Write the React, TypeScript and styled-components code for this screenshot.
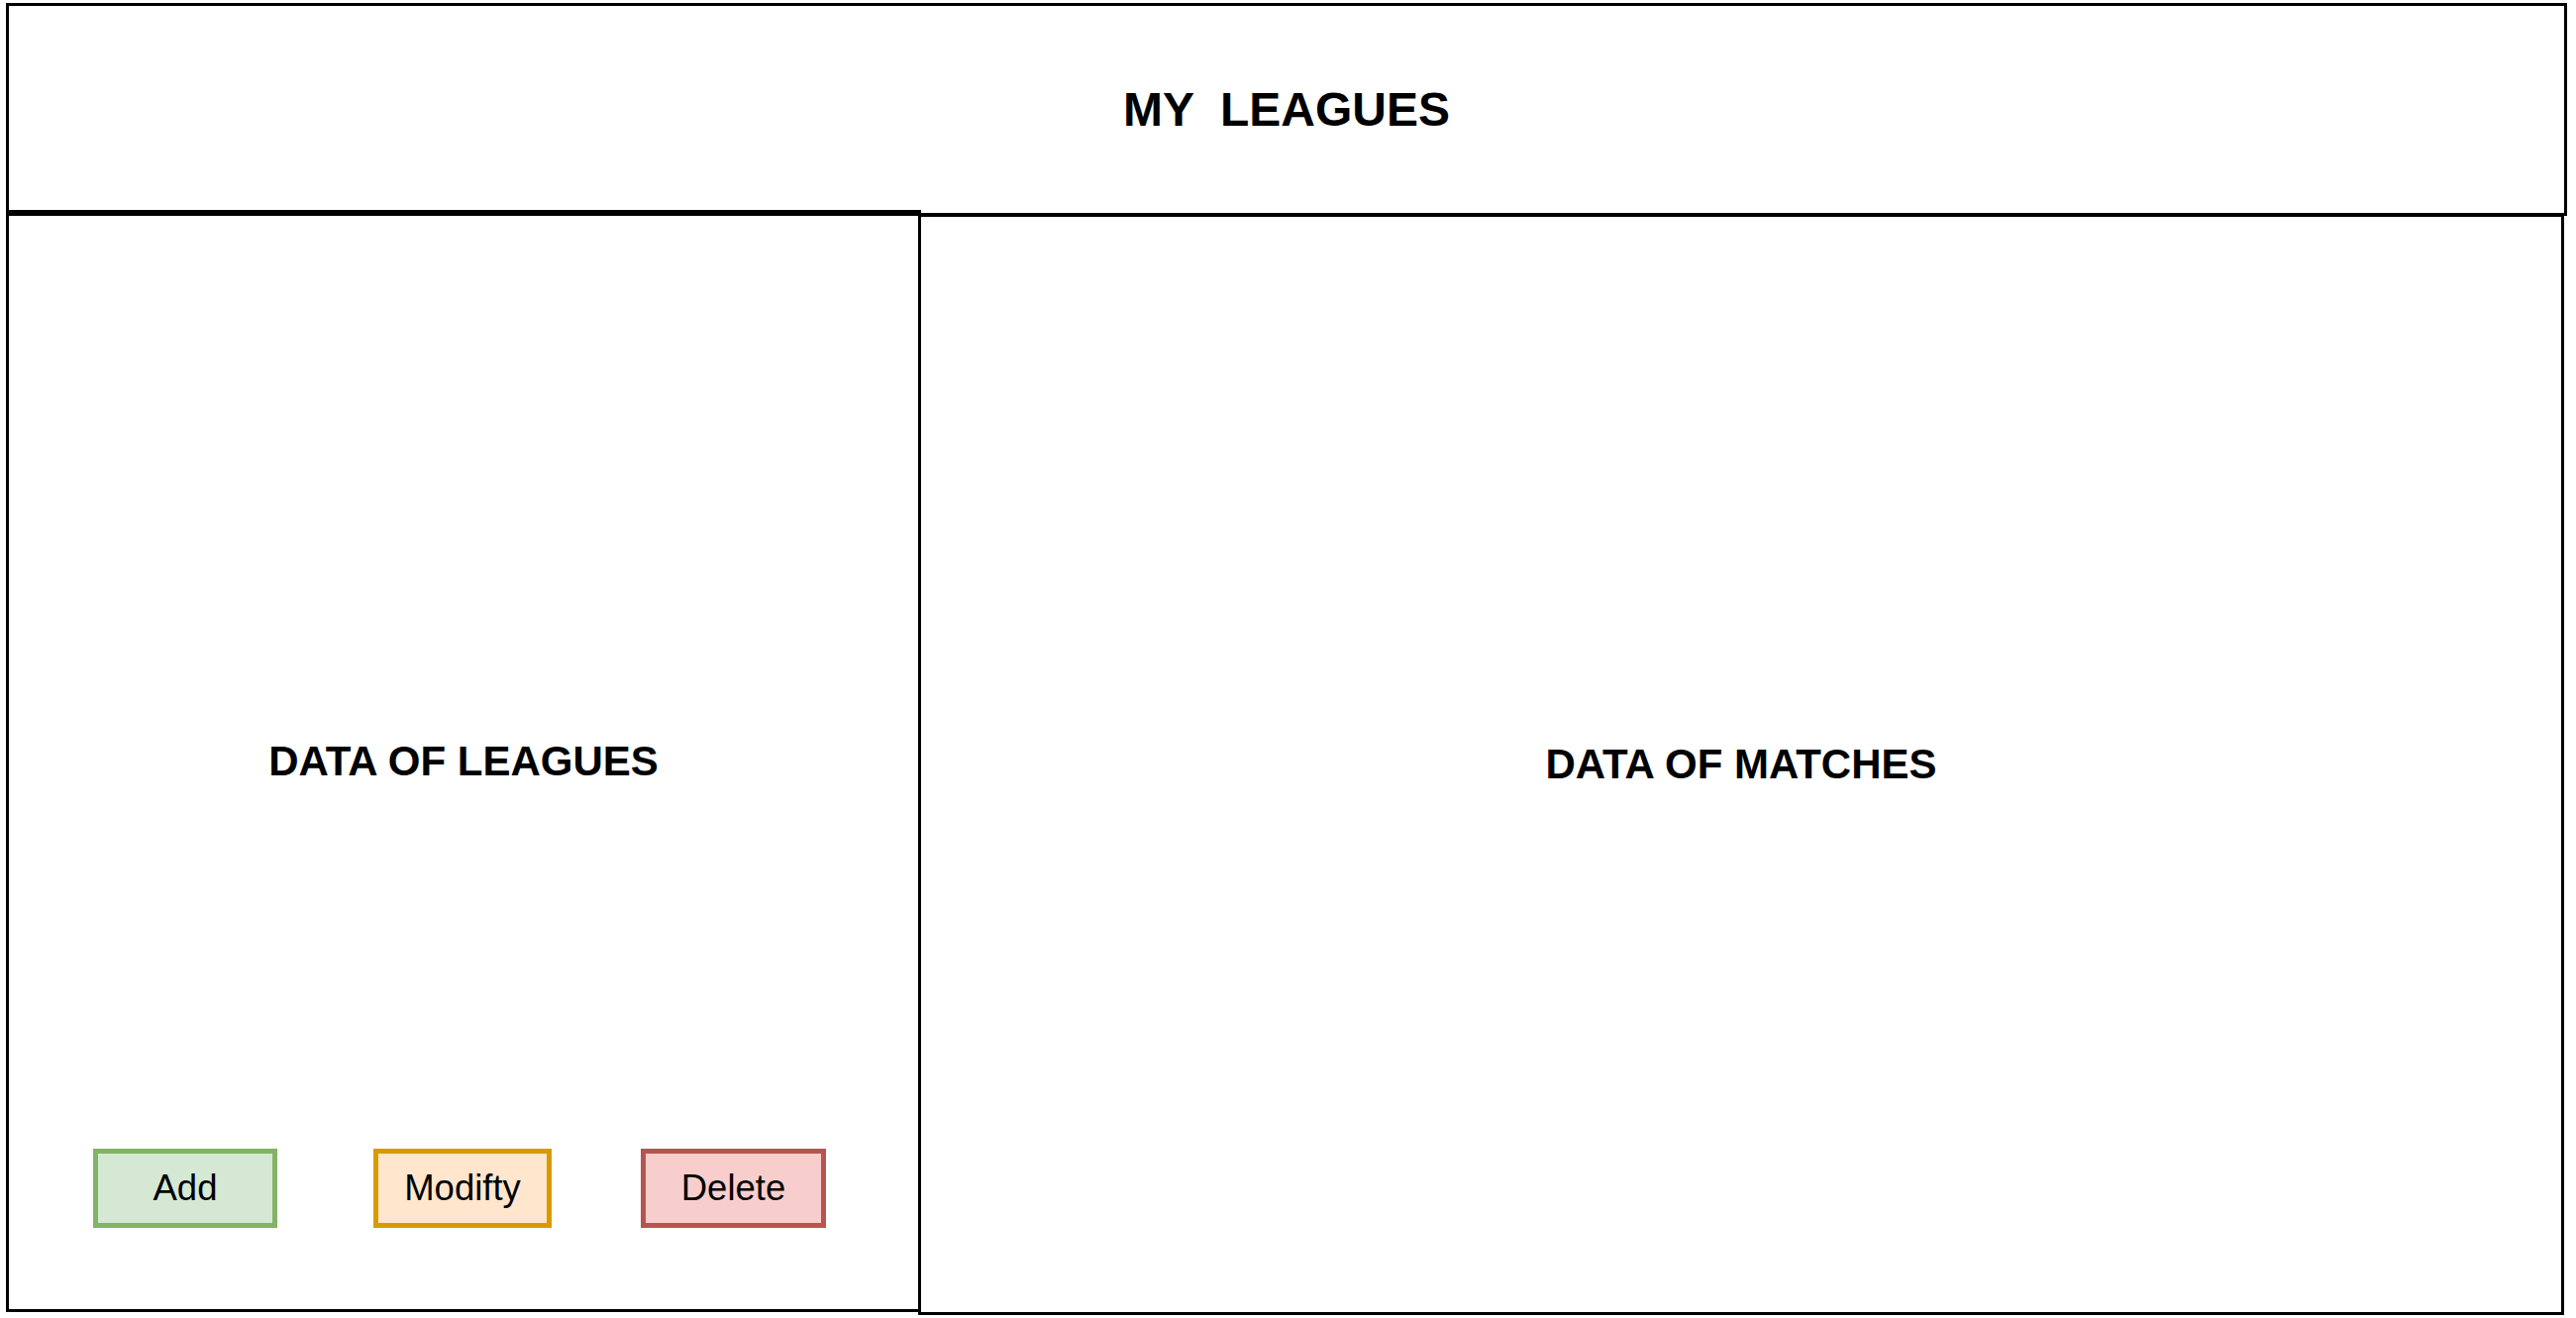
import styled, { createGlobalStyle } from "styled-components";

const GlobalStyle = createGlobalStyle`
  html, body {
    margin: 0;
    padding: 0;
    background: #fff;
  }
  body {
    font-family: "Liberation Sans", Arial, sans-serif;
    color: #000;
  }
`;

const Page = styled.div`
  padding: 3px 0 0 6px;
  width: 2601px;
  height: 1331px;
  box-sizing: border-box;
  overflow: hidden;
`;

const Header = styled.header`
  box-sizing: border-box;
  width: 2586px;
  height: 215px;
  border: 3px solid #000;
  display: flex;
  align-items: center;
  justify-content: center;
`;

const Title = styled.h1`
  margin: 0;
  font-size: 48px;
  font-weight: 700;
  white-space: pre;
  line-height: 1;
`;

const Body = styled.div`
  display: flex;
  align-items: flex-start;
`;

const Panel = styled.section<{ $w: number; $h: number; $top: number; $left?: number }>`
  box-sizing: border-box;
  width: ${(p) => p.$w}px;
  height: ${(p) => p.$h}px;
  margin-top: ${(p) => p.$top}px;
  margin-left: ${(p) => p.$left ?? 0}px;
  border: 3px solid #000;
  display: flex;
  flex-direction: column;
  background: transparent;
`;

const PanelLabel = styled.div<{ $balance?: number }>`
  flex: 1;
  display: flex;
  align-items: center;
  justify-content: center;
  padding-top: ${(p) => p.$balance ?? 0}px;
  font-size: 42px;
  font-weight: 700;
  line-height: 1;
`;

const ButtonRow = styled.div`
  display: flex;
  padding: 0 0 82px 85px;
`;

const palette = {
  add: { fill: "#d5e8d4", stroke: "#82b366" },
  modify: { fill: "#ffe6cc", stroke: "#d79b00" },
  delete: { fill: "#f8cecc", stroke: "#b85450" },
};

type Kind = keyof typeof palette;

const ActionButton = styled.button<{ $kind: Kind; $w: number; $gap: number }>`
  box-sizing: border-box;
  width: ${(p) => p.$w}px;
  height: 80px;
  margin-left: ${(p) => p.$gap}px;
  background: ${(p) => palette[p.$kind].fill};
  border: 5px solid ${(p) => palette[p.$kind].stroke};
  border-radius: 0;
  padding: 0;
  font-family: "Liberation Sans", Arial, sans-serif;
  font-size: 36.5px;
  color: #000;
  display: flex;
  align-items: center;
  justify-content: center;
  cursor: pointer;
`;

const buttons: { kind: Kind; label: string; w: number; gap: number }[] = [
  { kind: "add", label: "Add", w: 186, gap: 0 },
  { kind: "modify", label: "Modifty", w: 180, gap: 97 },
  { kind: "delete", label: "Delete", w: 187, gap: 90 },
];

export default function App() {
  return (
    <>
      <GlobalStyle />
      <Page>
        <Header>
          <Title>{"MY  LEAGUES"}</Title>
        </Header>
        <Body>
          {/* leagues list + actions */}
          <Panel $w={924} $h={1113} $top={-6}>
            <PanelLabel $balance={162}>DATA OF LEAGUES</PanelLabel>
            <ButtonRow>
              {buttons.map((b) => (
                <ActionButton key={b.kind} $kind={b.kind} $w={b.w} $gap={b.gap}>
                  {b.label}
                </ActionButton>
              ))}
            </ButtonRow>
          </Panel>

          {/* matches */}
          <Panel $w={1662} $h={1112} $top={-2} $left={-3}>
            <PanelLabel>DATA OF MATCHES</PanelLabel>
          </Panel>
        </Body>
      </Page>
    </>
  );
}
